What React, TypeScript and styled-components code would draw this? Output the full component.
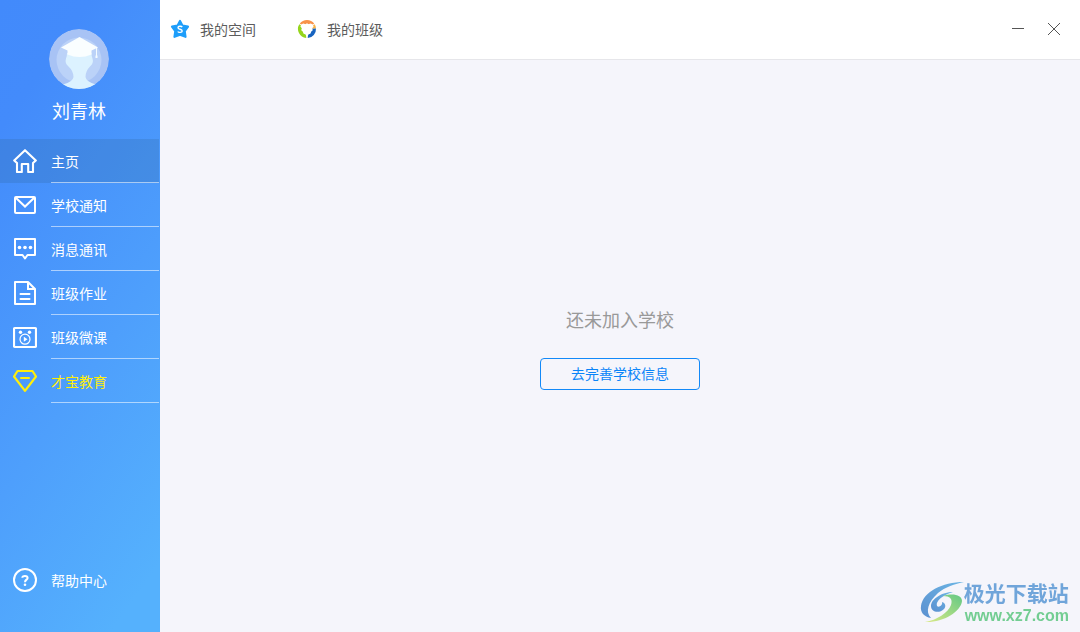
import React from "react";
import styled, { createGlobalStyle } from "styled-components";

const GlobalStyle = createGlobalStyle`
  * { box-sizing: border-box; }
  body {
    margin: 0;
    font-family: "Noto Sans CJK SC", "Liberation Sans", sans-serif;
    font-size: 14px;
    font-weight: 400;
  }
  button { font: inherit; cursor: pointer; }
`;

const Shell = styled.div`
  display: flex;
  min-height: 100vh;
  background: #f5f5fb;
`;

const Sidebar = styled.aside`
  flex: 0 0 160px;
  display: flex;
  flex-direction: column;
  padding: 29px 0 30px;
  color: #fff;
  background: linear-gradient(125deg, #428afb 0%, #438bfb 15%, #4e9ffc 58%, #55b1fd 92%, #55b1fd 100%);
`;

const Profile = styled.div`
  display: flex;
  flex-direction: column;
  align-items: center;
  gap: 7px;
  height: 110px;
  padding-right: 2px;
`;

const UserName = styled.div`
  font-size: 18px;
  line-height: 28px;
`;

const NavList = styled.ul`
  list-style: none;
  margin: 0;
  padding: 0;
`;

const NavLink = styled.a<{ $active?: boolean; $gold?: boolean }>`
  display: flex;
  align-items: center;
  gap: 14px;
  height: 44px;
  margin-right: 1px;
  padding-left: 13px;
  color: ${(p) => (p.$gold ? "#ffee0a" : "#fff")};
  background: ${(p) => (p.$active ? "rgba(48, 104, 160, 0.25)" : "transparent")};
  text-decoration: none;
`;

const NavLabel = styled.span<{ $lined?: boolean }>`
  flex: 1;
  height: 44px;
  line-height: 44px;
  border-bottom: ${(p) => (p.$lined ? "1px solid rgba(255, 255, 255, 0.55)" : "none")};
`;

const HelpArea = styled.div`
  margin-top: auto;
`;

const Content = styled.div`
  flex: 1;
  min-width: 0;
  display: flex;
  flex-direction: column;
`;

const TopBar = styled.header`
  display: flex;
  align-items: center;
  justify-content: space-between;
  height: 60px;
  padding: 0 16px 2px 10px;
  background: #fff;
  border-bottom: 1px solid #e6e6ea;
`;

const Tabs = styled.nav`
  display: flex;
  gap: 41px;
`;

const Tab = styled.a`
  display: flex;
  align-items: center;
  gap: 10px;
  color: #5c5c5c;
  line-height: 20px;
  text-decoration: none;
`;

const WindowControls = styled.div`
  display: flex;
  gap: 16px;
`;

const WindowButton = styled.button`
  display: flex;
  width: 20px;
  height: 20px;
  padding: 0;
  border: 0;
  background: none;
  color: #555;
`;

const Empty = styled.main`
  flex: 1;
  display: flex;
  flex-direction: column;
  align-items: center;
  justify-content: center;
  gap: 22px;
`;

const EmptyTitle = styled.p`
  margin: 0;
  font-size: 18px;
  line-height: 34px;
  color: #999;
`;

const OutlineButton = styled.button`
  width: 160px;
  height: 32px;
  padding: 0 0 2px;
  border: 1px solid #1289f8;
  border-radius: 4px;
  background: transparent;
  color: #0a84f8;
`;

const Watermark = styled.div`
  position: fixed;
  right: 11px;
  bottom: 6px;
  display: flex;
  align-items: center;
  pointer-events: none;
`;

const SiteName = styled.div`
  font-size: 21px;
  line-height: 28px;
  font-weight: 700;
  color: #70a5da;
`;

const SiteUrl = styled.div`
  padding-left: 1px;
  font-family: "Liberation Sans", sans-serif;
  font-size: 16px;
  line-height: 20px;
  font-weight: 700;
  color: #73cd92;
`;

const Glyph = ({ children }: { children: React.ReactNode }) => (
  <svg width="24" height="24" viewBox="0 0 24 24" fill="none" stroke="currentColor" strokeWidth="2" aria-hidden="true">
    {children}
  </svg>
);

const HomeIcon = () => (
  <Glyph>
    <path strokeLinejoin="round" strokeWidth="2.1" d="M12 1.2 1.2 11.4 4 14V23H8.8V15H15.2V23H20V14L22.8 11.4Z" />
  </Glyph>
);

const MailIcon = () => (
  <Glyph>
    <rect x="2" y="4" width="20" height="16" rx="1" />
    <path d="M2.5 4.5 12 13.5 21.5 4.5" />
  </Glyph>
);

const ChatIcon = () => (
  <Glyph>
    <path d="M2 2H22V18H14.5L12 21.5 9.5 18H2Z" strokeLinejoin="round" />
    <g fill="currentColor" stroke="none">
      <circle cx="6.5" cy="10.5" r="1.8" />
      <circle cx="12" cy="10.5" r="1.8" />
      <circle cx="17.5" cy="10.5" r="1.8" />
    </g>
  </Glyph>
);

const DocumentIcon = () => (
  <Glyph>
    <path d="M2 1H15L22 8V23H2Z" strokeLinejoin="round" />
    <path d="M15 1.5V8H22" />
    <path d="M7.5 13H16.5M7.5 18H16.5" strokeLinecap="round" />
  </Glyph>
);

const LessonIcon = () => (
  <Glyph>
    <rect x="1" y="3" width="22" height="19" rx="1" strokeWidth="2.2" />
    <circle cx="7.5" cy="7.3" r="1.7" fill="currentColor" stroke="none" />
    <circle cx="16.5" cy="7.3" r="1.7" fill="currentColor" stroke="none" />
    <circle cx="12" cy="14.2" r="5" strokeWidth="1.2" />
    <path d="M10.8 11.7V16.7L14.5 14.2Z" fill="currentColor" stroke="none" />
  </Glyph>
);

const GemIcon = () => (
  <Glyph>
    <path d="M4.5 2H19.5L23 7.5 12 21.8 1 7.5Z" strokeLinejoin="round" strokeWidth="2.2" />
    <path d="M8 9H16" strokeLinecap="round" />
  </Glyph>
);

const HelpIcon = () => (
  <Glyph>
    <circle cx="12" cy="12" r="11" />
    <path d="M9.3 9.7C9.3 7.3 14.6 7.2 14.6 9.9C14.6 11.7 12 11.6 12 14.2" />
    <circle cx="12" cy="16.7" r="1.3" fill="currentColor" stroke="none" />
  </Glyph>
);

const Avatar = () => (
  <svg width="60" height="60" viewBox="0 0 60 60" role="img" aria-label="刘青林">
    <defs>
      <clipPath id="avatar-clip">
        <circle cx="30" cy="30" r="30" />
      </clipPath>
    </defs>
    <g clipPath="url(#avatar-clip)">
      <circle cx="30" cy="30" r="30" fill="#a8c3f5" />
      <circle cx="30" cy="31" r="22.5" fill="#bbd2f8" />
      <path
        fill="#dcf2ff"
        d="M18 24Q18 28 17 29.5Q15.5 34 19.5 37.5Q24.5 42 24.5 48Q24 53 14 55.5V60H47V55.5Q37 53 36.5 48Q36.5 42 41 37.5Q45 34 43.5 29.5Q42.5 28 42.5 24Z"
      />
      <path fill="#fafeff" d="M30.5 8 49 18.5 42.5 21.5V25.5Q30.5 30.5 18.5 25.5V21.5L12 18.5Z" />
      <path d="M47.5 19V28" stroke="#f3fbff" strokeWidth="1" />
      <path d="M46.5 26.5H48.5V29H46.5Z" fill="#f3fbff" />
    </g>
  </svg>
);

const SpaceIcon = () => (
  <svg width="20" height="20" viewBox="0 0 20 20" fill="none" aria-hidden="true">
    <path
      d="M10 2 12.5 6.7 18 7.7 14.7 12.2 15.5 17.8 10 15.7 4.5 17.8 5.3 12.2 2 7.7 7.5 6.7Z"
      fill="#1e9efa"
      stroke="#1e9efa"
      strokeWidth="2.2"
      strokeLinejoin="round"
    />
    <path
      d="M12.2 8.2C11.5 6.9 8 6.9 8 8.7C8 10.7 12.2 9.8 12.2 11.9C12.2 13.8 8.5 13.8 7.8 12.5"
      stroke="#fff"
      strokeWidth="1.4"
    />
  </svg>
);

const ClassIcon = () => (
  <svg width="20" height="20" viewBox="0 0 20 20" fill="none" strokeWidth="4" aria-hidden="true">
    <path stroke="#f8924a" d="M4.4 5.8A7 7 0 0 1 15.6 5.8" />
    <path stroke="#95d51c" d="M4 6.4A7 7 0 0 0 9.4 17" />
    <path stroke="#f9b347" d="M16 6.4A7 7 0 0 1 17 9.6" />
    <path stroke="#1764c0" d="M17 9.6A7 7 0 0 1 10.6 17" />
    <path
      fill="#fff"
      d="M4.4 5.2 6.6 4.4 8.4 5.2 10 4.2 11.6 5.2 13.4 4.4 15.6 5.2 16.6 7.4 15.2 9.2 15.8 11.2 14 12.6 13.6 14.6 11.4 15.4 10 19 8.6 15.4 6.4 14.6 6 12.6 4.2 11.2 4.8 9.2 3.4 7.4Z"
    />
  </svg>
);

const WatermarkLogo = () => (
  <svg width="44" height="42" viewBox="0 0 44 42" aria-hidden="true">
    <defs>
      <linearGradient id="wm-blue" x1="0" y1="1" x2="1" y2="0">
        <stop offset="0" stopColor="#5b90d0" />
        <stop offset="1" stopColor="#6bb5e4" />
      </linearGradient>
      <linearGradient id="wm-green" x1="0" y1="1" x2="1" y2="0">
        <stop offset="0" stopColor="#dcea86" />
        <stop offset="1" stopColor="#63c884" />
      </linearGradient>
    </defs>
    <path
      fill="url(#wm-blue)"
      d="M44 1C22 1 3 11 1 25C0 31 4 36 11 37C5 31 8 21 18 12C25 6 35 3 44 1Z"
    />
    <path
      fill="url(#wm-blue)"
      d="M33 11C22 11 11 18 11 25C11 31 19 33 24 28C26 26 26 22 22 21C23 24 19 27 17 25C15 20 23 14 33 11Z"
    />
    <path
      fill="url(#wm-green)"
      d="M23 15C33 12 42 14 42 20C41 31 22 42 5 41C17 39 28 32 31 24C33 18 30 15 23 15Z"
    />
  </svg>
);

const navItems = [
  { label: "主页", Icon: HomeIcon, active: true },
  { label: "学校通知", Icon: MailIcon },
  { label: "消息通讯", Icon: ChatIcon },
  { label: "班级作业", Icon: DocumentIcon },
  { label: "班级微课", Icon: LessonIcon },
  { label: "才宝教育", Icon: GemIcon, gold: true },
];

export default function App() {
  return (
    <>
      <GlobalStyle />
      <Shell>
        <Sidebar>
          <Profile>
            <Avatar />
            <UserName>刘青林</UserName>
          </Profile>
          <nav>
            <NavList>
              {navItems.map(({ label, Icon, active, gold }) => (
                <li key={label}>
                  <NavLink href="#" $active={active} $gold={gold} aria-current={active ? "page" : undefined}>
                    <Icon />
                    <NavLabel $lined>{label}</NavLabel>
                  </NavLink>
                </li>
              ))}
            </NavList>
          </nav>
          <HelpArea>
            <NavLink href="#">
              <HelpIcon />
              <NavLabel>帮助中心</NavLabel>
            </NavLink>
          </HelpArea>
        </Sidebar>
        <Content>
          <TopBar>
            <Tabs>
              <Tab href="#">
                <SpaceIcon />
                我的空间
              </Tab>
              <Tab href="#">
                <ClassIcon />
                我的班级
              </Tab>
            </Tabs>
            <WindowControls>
              <WindowButton type="button" aria-label="最小化">
                <svg width="20" height="20" viewBox="0 0 20 20" stroke="currentColor">
                  <path d="M4 9.5H16" />
                </svg>
              </WindowButton>
              <WindowButton type="button" aria-label="关闭">
                <svg width="20" height="20" viewBox="0 0 20 20" stroke="currentColor">
                  <path d="M4 4 16 16M16 4 4 16" />
                </svg>
              </WindowButton>
            </WindowControls>
          </TopBar>
          <Empty>
            <EmptyTitle>还未加入学校</EmptyTitle>
            <OutlineButton type="button">去完善学校信息</OutlineButton>
          </Empty>
        </Content>
      </Shell>
      <Watermark>
        <WatermarkLogo />
        <div>
          <SiteName>极光下载站</SiteName>
          <SiteUrl>www.xz7.com</SiteUrl>
        </div>
      </Watermark>
    </>
  );
}
